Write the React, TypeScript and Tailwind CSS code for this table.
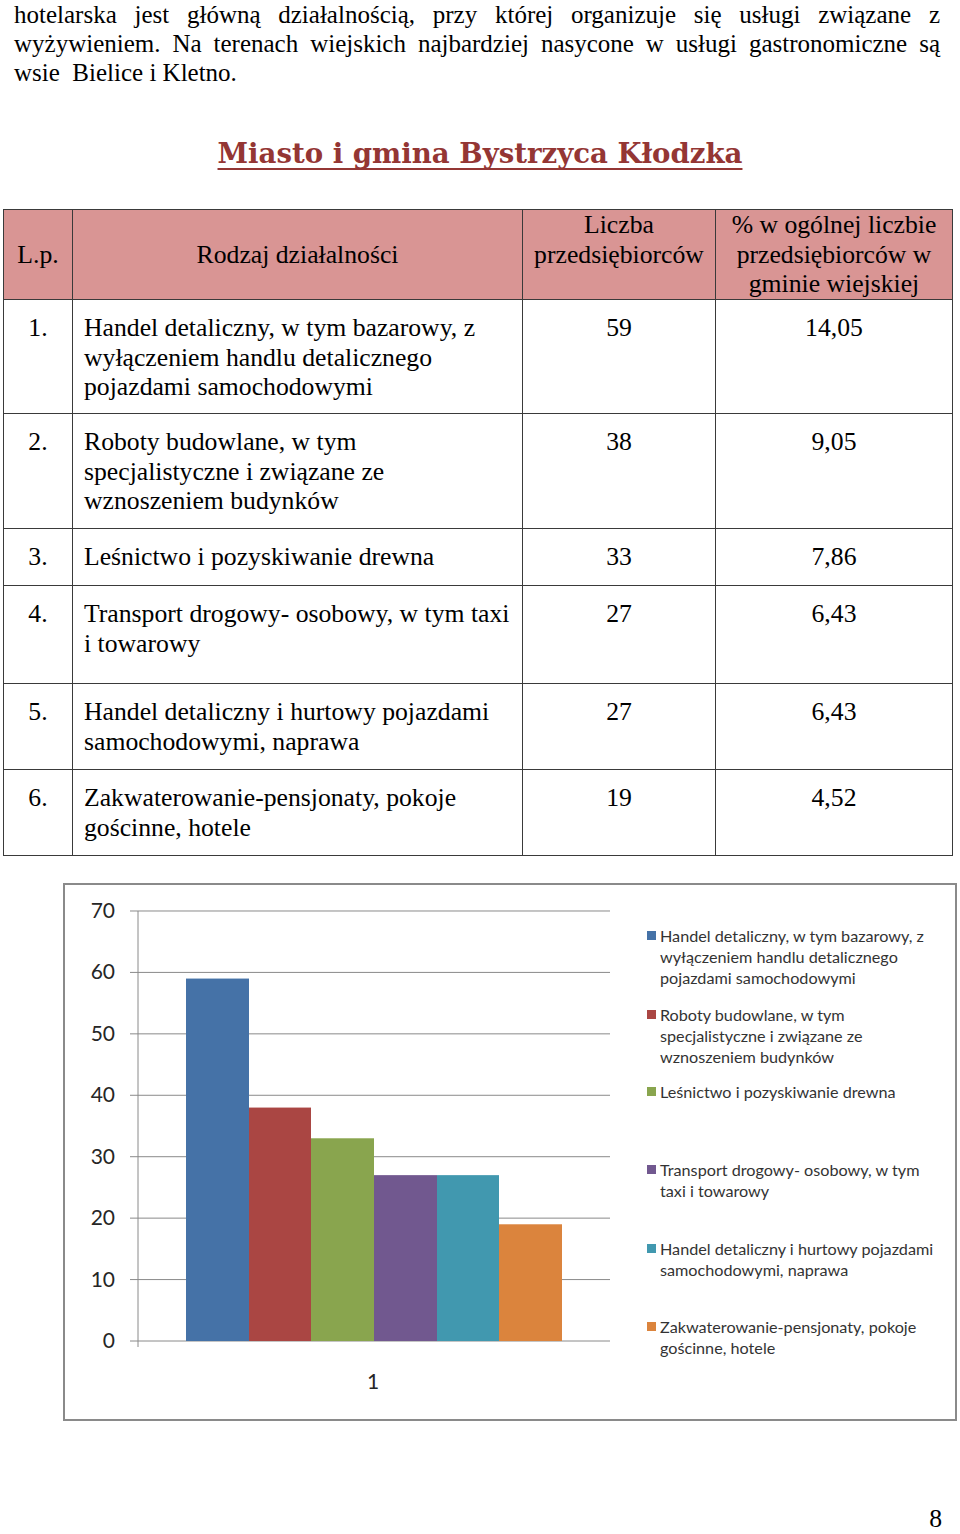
const rows = [
  { n: "1.", lines: ["Handel detaliczny, w tym bazarowy, z", "wyłączeniem handlu detalicznego", "pojazdami samochodowymi"], count: "59", pct: "14,05", h: "h-[114px]" },
  { n: "2.", lines: ["Roboty budowlane, w tym", "specjalistyczne i związane ze", "wznoszeniem budynków"], count: "38", pct: "9,05", h: "h-[115px]" },
  { n: "3.", lines: ["Leśnictwo i pozyskiwanie drewna"], count: "33", pct: "7,86", h: "h-[57px]" },
  { n: "4.", lines: ["Transport drogowy- osobowy, w tym taxi", "i towarowy"], count: "27", pct: "6,43", h: "h-[98px]" },
  { n: "5.", lines: ["Handel detaliczny i hurtowy pojazdami", "samochodowymi, naprawa"], count: "27", pct: "6,43", h: "h-[86px]" },
  { n: "6.", lines: ["Zakwaterowanie-pensjonaty, pokoje", "gościnne, hotele"], count: "19", pct: "4,52", h: "h-[86px]" },
];

const bars = [
  { v: 59, x: 121, w: 63, color: "#4572a7" },
  { v: 38, x: 184, w: 62, color: "#aa4643" },
  { v: 33, x: 246, w: 63, color: "#89a54e" },
  { v: 27, x: 309, w: 63, color: "#71588f" },
  { v: 27, x: 372, w: 62, color: "#4198af" },
  { v: 19, x: 434, w: 63, color: "#db843d" },
];

const legend = [
  { color: "#4572a7", mt: "mt-[40px]", lines: ["Handel detaliczny, w tym bazarowy, z", "wyłączeniem handlu detalicznego", "pojazdami samochodowymi"] },
  { color: "#aa4643", mt: "mt-[16px]", lines: ["Roboty budowlane, w tym", "specjalistyczne i związane ze", "wznoszeniem budynków"] },
  { color: "#89a54e", mt: "mt-[14px]", lines: ["Leśnictwo i pozyskiwanie drewna"] },
  { color: "#71588f", mt: "mt-[57px]", lines: ["Transport drogowy- osobowy, w tym", "taxi i towarowy"] },
  { color: "#4198af", mt: "mt-[37px]", lines: ["Handel detaliczny i hurtowy pojazdami", "samochodowymi, naprawa"] },
  { color: "#db843d", mt: "mt-[36px]", lines: ["Zakwaterowanie-pensjonaty, pokoje", "gościnne, hotele"] },
];

const yOf = (v: number) => 456 - v * 6.143;

function Chart() {
  return (
    <div className="ml-[63px] mt-[27px] flex h-[538px] w-[894px] border-2 border-[#8a8a8a] bg-white">
      <svg width="570" height="534" className="shrink-0">
        {[0, 10, 20, 30, 40, 50, 60, 70].map((t) => (
          <g key={t}>
            <line x1="65" x2="545" y1={yOf(t)} y2={yOf(t)} stroke="#8a8a8a" strokeWidth="1" />
            <text x="50" y={yOf(t) + 7} textAnchor="end" fontSize="21" fontFamily="Lato, sans-serif" fill="#262626">
              {t}
            </text>
          </g>
        ))}
        <line x1="73" x2="73" y1={yOf(70)} y2={yOf(0) + 6} stroke="#8a8a8a" strokeWidth="1" />
        {bars.map((b) => (
          <rect key={b.x} x={b.x} y={yOf(b.v)} width={b.w} height={yOf(0) - yOf(b.v)} fill={b.color} />
        ))}
        <text x="308" y="504" textAnchor="middle" fontSize="21" fontFamily="Lato, sans-serif" fill="#262626">
          1
        </text>
      </svg>
      <div className="flex flex-col pl-[12px] font-['Lato',sans-serif] text-[16.2px] leading-[21px] text-[#333]">
        {legend.map((l) => (
          <div key={l.color} className={`flex ${l.mt}`}>
            <span className="mr-[4px] mt-[6px] h-[9px] w-[9px] shrink-0" style={{ backgroundColor: l.color }} />
            <div className="whitespace-nowrap">
              {l.lines.map((s) => (
                <div key={s}>{s}</div>
              ))}
            </div>
          </div>
        ))}
      </div>
    </div>
  );
}

export default function App() {
  return (
    <div className="w-[960px] h-[1534px] overflow-hidden bg-white font-['Liberation_Serif',serif] text-[25.7px] text-black">
      <div className="pl-[14px] pr-[20px] text-[25px] leading-[29px]">
        <div className="text-justify [text-align-last:justify]">
          hotelarska jest główną działalnością, przy której organizuje się usługi związane z
        </div>
        <div className="text-justify [text-align-last:justify]">
          wyżywieniem. Na terenach wiejskich najbardziej nasycone w usługi gastronomiczne są
        </div>
        <div className="whitespace-pre">wsie  Bielice i Kletno.</div>
      </div>

      <h1 className="mt-[47px] text-center font-['DejaVu_Serif',serif] text-[27.6px] leading-[40px] font-bold text-[#943634] underline decoration-2 underline-offset-[5px] [text-decoration-skip-ink:none]">
        Miasto i gmina Bystrzyca Kłodzka
      </h1>

      <table className="ml-[3px] mt-[35px] w-[949px] table-fixed border-collapse leading-[29.5px]">
        <colgroup>
          <col className="w-[69px]" />
          <col className="w-[450px]" />
          <col className="w-[193px]" />
          <col className="w-[237px]" />
        </colgroup>
        <thead>
          <tr className="h-[90px] bg-[#d99594]">
            <th className="border border-[#3a3a3a] p-0 align-middle font-normal">L.p.</th>
            <th className="border border-[#3a3a3a] p-0 align-middle font-normal">Rodzaj działalności</th>
            <th className="border border-[#3a3a3a] p-0 align-top font-normal">
              Liczba
              <br />
              przedsiębiorców
            </th>
            <th className="border border-[#3a3a3a] p-0 align-top font-normal">
              % w ogólnej liczbie
              <br />
              przedsiębiorców w
              <br />
              gminie wiejskiej
            </th>
          </tr>
        </thead>
        <tbody>
          {rows.map((r) => (
            <tr key={r.n} className={r.h}>
              <td className="border border-[#3a3a3a] p-0 pt-[13px] text-center align-top">{r.n}</td>
              <td className="border border-[#3a3a3a] p-0 pl-[11px] pt-[13px] align-top">
                {r.lines.map((s) => (
                  <div key={s} className="whitespace-nowrap">{s}</div>
                ))}
              </td>
              <td className="border border-[#3a3a3a] p-0 pt-[13px] text-center align-top">{r.count}</td>
              <td className="border border-[#3a3a3a] p-0 pt-[13px] text-center align-top">{r.pct}</td>
            </tr>
          ))}
        </tbody>
      </table>

      <Chart />

      <div className="mt-[88px] pr-[18px] text-right leading-[20px]">8</div>
    </div>
  );
}
